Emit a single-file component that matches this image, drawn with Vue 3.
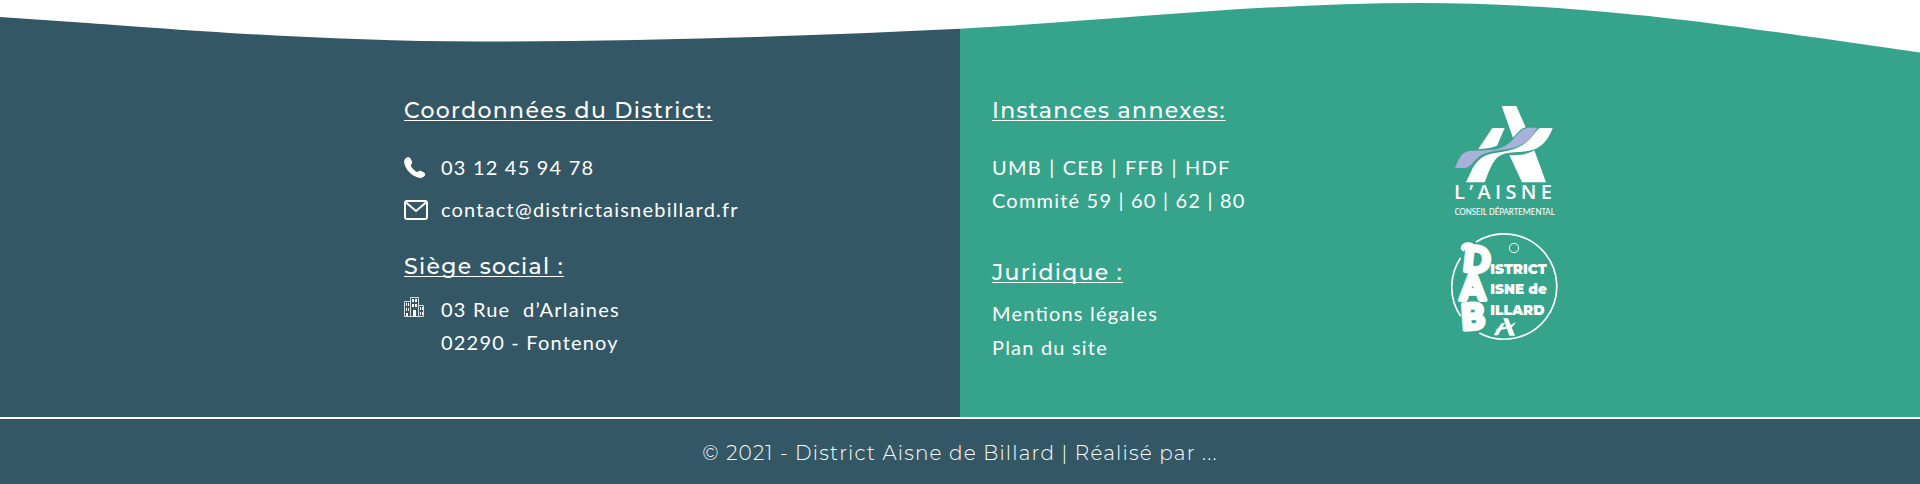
<script setup>
const phone = '03 12 45 94 78'
const email = 'contact@districtaisnebillard.fr'
</script>

<template>
  <footer class="footer">
    <div class="main">
      <svg class="wave" viewBox="0 0 1920 54" preserveAspectRatio="none" aria-hidden="true">
        <path fill="#fff" d="M0 0V17L80 22.400C160 28 320 41.500 480 41.500C640 41.500 800 36.500 960 28.700C1120 20 1260 3 1420 3C1600 3 1760 30.500 1840 41L1920 52.500V0Z" />
      </svg>
      <div class="halves">
        <section class="half left">
          <div class="contact">
            <h2>Coordonnées du District:</h2>
            <address class="lines">
              <p class="row phone">
                <svg class="icon" viewBox="0 0 24 24" aria-hidden="true">
                  <path fill="#fff" d="M1.500 2.500C3.500.500 5.500 1 6.500 2.500L8 5.500C8.600 7.200 7.800 8 6.600 9C7.500 12 10.500 15 13.500 16.200C14.600 14.800 15.800 14.300 17.200 15L20 16.600C21.700 17.800 21.400 19.200 20 20.500C18.600 21.900 16.500 22.300 14 21.500C7.500 19.500 2 14 .500 8C-.200 5.500.200 3.800 1.500 2.500Z" />
                </svg>
                <span>{{ phone }}</span>
              </p>
              <p class="row">
                <svg class="icon" viewBox="0 0 24 24" aria-hidden="true">
                  <rect x="1" y="3" width="22" height="18" rx="2" fill="none" stroke="#fff" stroke-width="2" />
                  <path d="M2 4.500L12 13L22 4.500" fill="none" stroke="#fff" stroke-width="2" />
                </svg>
                <a :href="`mailto:${email}`">{{ email }}</a>
              </p>
            </address>
            <h2>Siège social :</h2>
            <address class="row office">
              <svg class="icon" viewBox="0 0 24 24" aria-hidden="true">
                <g fill="none" stroke="#d5dde0" stroke-width="1">
                  <path d="M.500 19.500V4.500H6.500V.500H14.500V8.500H19.500V19.500ZM6.500 4.500V19M14.500 8.500V19.500" />
                </g>
                <path fill="#fff" d="M8 2h2v3H8zM11 2h2v3h-2zM8 7h2v3H8zM11 7h2v3h-2zM2 6h1v3H2zM4 6h1v3H4zM2 11h1v3H2zM4 11h1v3H4zM2 16h2v3H2zM9 13h3v7H9zM16 10h1v3h-1zM18 10h1v3h-1zM16 15h1v3h-1zM18 15h1v3h-1z" />
              </svg>
              <span>03 Rue&nbsp; d’Arlaines<br>02290 - Fontenoy</span>
            </address>
          </div>
        </section>
        <section class="half right">
          <div class="links">
            <h2>Instances annexes:</h2>
            <p class="bodies">UMB <i>|</i> CEB <i>|</i> FFB <i>|</i> HDF<br>Commité 59 | 60 | 62 | 80</p>
            <h2>Juridique :</h2>
            <ul>
              <li><a href="#mentions">Mentions légales</a></li>
              <li><a href="#plan">Plan du site</a></li>
            </ul>
          </div>
          <div class="logos">
            <svg viewBox="0 0 390 375" class="aisne" role="img" aria-label="L'Aisne, conseil départemental">
              <g fill="#fff">
                <path d="M157 99H194L171 152C153 160 135 161 115 162Z" />
                <path d="M185 33H229L257 97C239 102 230 118 219 128Z" />
                <path d="M299 99H338C323 139 302 162 263 168C231 174 200 168 177 184C158 196 147 229 134 262H78L100 215C117 192 130 179 166 174C205 168 239 161 262 139C278 126 285 109 299 99Z" />
                <path d="M208 180C237 182 263 178 283 166L318 262H246Z" />
              </g>
              <path fill="#a7b1d9" d="M45 219C55 196 62 173 86 168C119 164 153 169 184 158C220 145 226 114 253 102Q260 98 269 98H292C281 116 273 132 252 145C220 166 176 163 138 174C105 183 99 217 74 219Z" />
              <text class="aisne-name" x="42" y="313">L’AISNE</text>
              <text class="aisne-sub" x="44" y="360">CONSEIL DÉPARTEMENTAL</text>
            </svg>
            <svg viewBox="0 0 390 360" class="dab" role="img" aria-label="District Aisne de Billard">
              <g fill="none" stroke="#fff" stroke-width="5">
                <path d="M108 51A158 158 0 1 1 118 324M62 98A158 158 0 0 0 62 274" />
                <circle cx="222" cy="69" r="14" stroke-width="3" />
              </g>
              <g class="initials">
                <text x="67" y="137" transform="rotate(6 67 137)">D</text>
                <text x="61" y="226">A</text>
                <text x="66" y="315" transform="rotate(-4 66 315)">B</text>
              </g>
              <path fill="#fff" d="M62 72C62 55 78 48 98 54L100 70C84 68 74 72 70 80Z" />
              <g class="words">
                <text x="151" y="147">ISTRICT</text>
                <text x="151" y="206">ISNE de</text>
                <text x="151" y="271">ILLARD</text>
              </g>
              <g fill="#fff">
                <path d="M190 280H204L225 332H208Z" />
                <path d="M184 295H195L174 331H161Z" />
                <path d="M164 317C178 302 205 311 226 291C221 317 188 311 164 317Z" />
              </g>
            </svg>
          </div>
        </section>
      </div>
    </div>
    <div class="copyright">© 2021 - District Aisne de Billard | Réalisé par ...</div>
  </footer>
</template>

<style>
body {
  margin: 0;
  background: #fff;
}
</style>

<style scoped>
.footer {
  color: #fff;
  font-family: Lato, Carlito, sans-serif;
  font-size: 20px;
  line-height: 33px;
  letter-spacing: 0.06em;
  font-feature-settings: "liga" 1;
}
.main {
  background: linear-gradient(90deg, #345766 50%, #36a48b 50%);
}
.wave {
  display: block;
  width: 100%;
  height: 54px;
}
.halves {
  display: grid;
  grid-template-columns: 1fr 1fr;
}
.half {
  display: flex;
  padding: 41px 0 53px;
}
.left {
  justify-content: flex-end;
}
.contact {
  width: 556px;
}
.right {
  padding-left: 32px;
}
.links {
  width: 448px;
}
h2 {
  margin: 0;
  font-family: Montserrat, Inter, sans-serif;
  font-size: 22px;
  line-height: 32px;
  letter-spacing: 0.06em;
  font-weight: 500;
  text-decoration: underline;
  text-decoration-thickness: 1px;
  text-decoration-skip-ink: none;
  text-underline-offset: 2px;
}
address {
  font-style: normal;
}
p,
ul {
  margin: 0;
  padding: 0;
  list-style: none;
}
a {
  color: inherit;
  text-decoration: none;
}
.lines {
  display: flex;
  flex-direction: column;
  gap: 9px;
  padding: 24px 0 25px;
}
.row {
  display: flex;
  gap: 13px;
}
.icon {
  flex: none;
  width: 24px;
  height: 24px;
  margin-top: 5px;
}
.office {
  padding-top: 10px;
}
.office .icon {
  margin-top: 4px;
}
.bodies {
  padding: 24px 0 40px;
}
.bodies i {
  margin: 0 1px;
  font-style: normal;
}
ul {
  padding-top: 7px;
  line-height: 34px;
}
.logos {
  display: flex;
  flex-direction: column;
  gap: 5px;
}
.logos svg {
  display: block;
  width: 130px;
}
.aisne-name {
  fill: #fff;
  font: 600 60px "Open Sans", "Noto Sans", sans-serif;
  letter-spacing: 13px;
}
.aisne-sub {
  fill: #fff;
  font: 400 28px Carlito, Lato, sans-serif;
  letter-spacing: 0;
}
.initials {
  fill: #fff;
  stroke: #fff;
  stroke-width: 12px;
  stroke-linejoin: round;
  font: 900 106px Lato, sans-serif;
  letter-spacing: 0;
}
.words {
  fill: #fff;
  font: 900 41px Montserrat, Lato, sans-serif;
  letter-spacing: 0;
}
.copyright {
  border-top: 2px solid #fff;
  padding: 18px 0 14px;
  background: #345766;
  font-family: Montserrat, Inter, sans-serif;
  font-weight: 300;
  text-align: center;
}
</style>
